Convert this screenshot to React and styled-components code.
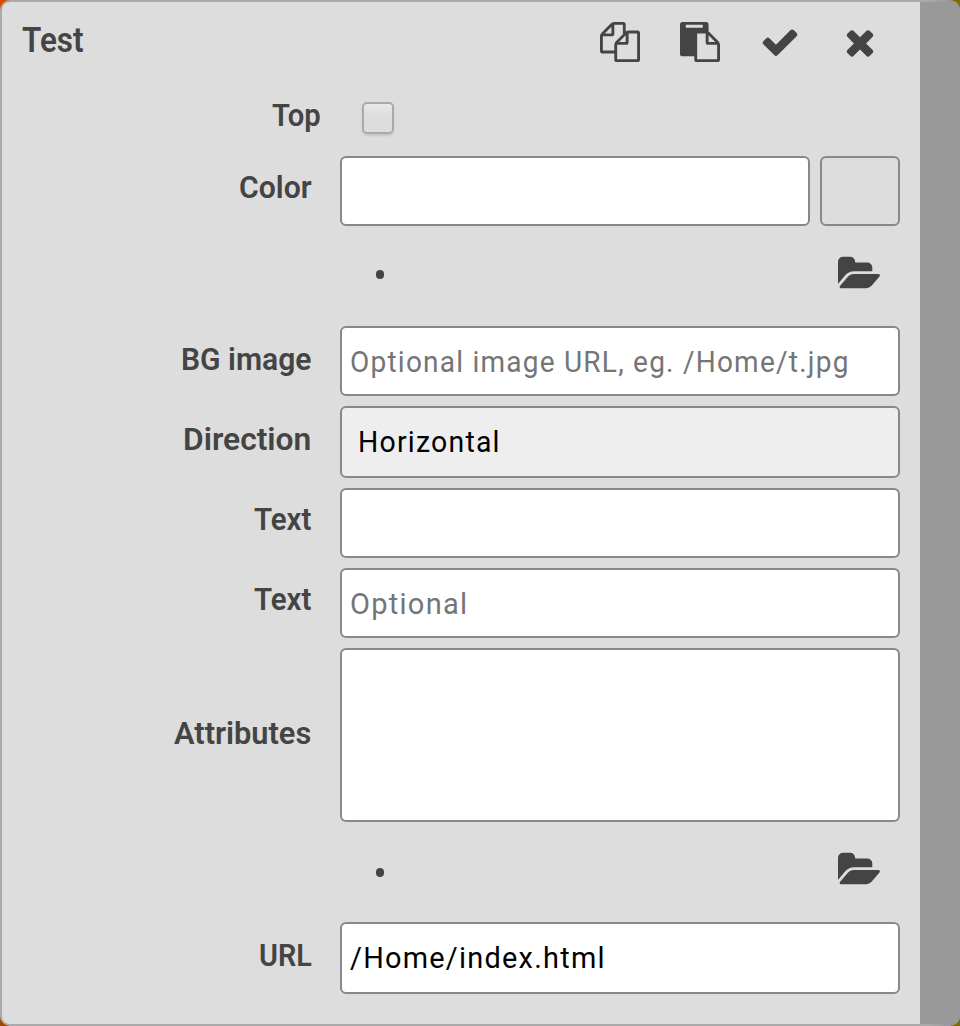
import React, { useLayoutEffect, useRef, useState } from "react";
import styled, { createGlobalStyle } from "styled-components";

const GlobalStyle = createGlobalStyle`
  *, *::before, *::after { box-sizing: border-box; }
  html, body { margin: 0; padding: 0; }
  body {
    background:
      linear-gradient(to right, #9c4a00 0 300px, #7d6c00 600px) 0 513px / 100% 513px no-repeat,
      linear-gradient(to right, #d94a00 0 300px, #7d6c00 600px);
    font-family: Roboto, "Open Sans", "Liberation Sans", sans-serif;
    color: #444;
    overflow: hidden;
  }
`;

const Frame = styled.div`
  display: flex;
  width: 960px;
  height: 1026px;
  padding: 2px 0 2px 2px;
  border-radius: 10px;
  overflow: hidden;
  background: linear-gradient(to right, #aaa 928px, #999 950px);
`;

const Panel = styled.main`
  width: 918px;
  height: 100%;
  border-radius: 8px 0 0 8px;
  background: #ddd;
`;

const ScrollTrack = styled.div`
  flex: 1;
  background: #999;
`;

const Header = styled.header`
  display: flex;
  justify-content: space-between;
  height: 90px;
  padding: 16px 40px 0 20px;
`;

const Title = styled.h1`
  margin: 0;
  font-size: 34.5px;
  line-height: 44px;
  font-weight: 600;
`;

const Actions = styled.nav`
  display: flex;
  gap: 40px;
  padding-top: 4px;
`;

const Icon = styled.svg`
  display: block;
  flex: none;
  width: ${(p) => p.$width || 40}px;
  height: 40px;
  margin-top: ${(p) => p.$shift || 0}px;
  overflow: visible;
  fill: #444;
`;

const Form = styled.form`
  display: flex;
  flex-direction: column;
  gap: 10px;
  padding-right: 20px;
`;

const Row = styled.div`
  display: flex;
  gap: 10px;
  height: ${(p) => p.$height}px;
`;

const Label = styled.label`
  display: flex;
  justify-content: flex-end;
  width: 328px;
  padding: ${(p) => p.$top}px ${(p) => p.$right || 19}px 0 0;
  font-size: 31px;
  line-height: 40px;
  font-weight: 600;
`;

const Field = styled.div`
  flex: 1;
  padding: 14px 0 0 ${(p) => (p.$select ? 16 : 8)}px;
  border: 2px solid #888;
  border-radius: 6px;
  background: ${(p) => (p.$select ? "#eee" : "#fff")};
  color: ${(p) => (p.$placeholder ? "#757575" : "#000")};
  font-size: 30px;
  font-weight: 400;
  line-height: 40px;
  letter-spacing: 1.3px;
`;

const Swatch = styled.div`
  width: 80px;
  border: 2px solid #888;
  border-radius: 6px;
`;

const Checkbox = styled.div`
  width: 32px;
  height: 32px;
  margin: 10px 0 0 22px;
  border: 2px solid #aaa;
  border-radius: 5px;
  background: linear-gradient(#eaeaea, #ddd 40%);
  box-shadow: 0 2px 2px rgba(0, 0, 0, 0.1);
`;

const FileRow = styled.div`
  display: flex;
  justify-content: space-between;
  height: 80px;
  padding: ${(p) => p.$top}px 19px 0 374px;
`;

const Bullet = styled.span`
  width: 8px;
  height: 9px;
  margin-top: ${(p) => p.$top}px;
  border-radius: 4px;
  background: #444;
`;

const FitBox = styled.span`
  display: block;
  width: ${(p) => p.$width}px;
  white-space: pre;
`;

const FitInner = styled.span`
  display: inline-block;
  transform-origin: 0 50%;
`;

function FitText({ width, children }) {
  const ref = useRef(null);
  const [scale, setScale] = useState(1);
  useLayoutEffect(() => {
    setScale(width / ref.current.offsetWidth);
  }, [width, children]);
  return (
    <FitBox $width={width}>
      <FitInner ref={ref} style={{ transform: `scaleX(${scale})` }}>{children}</FitInner>
    </FitBox>
  );
}

const paths = {
  copy: "M1696 384q40 0 68 28t28 68v1216q0 40-28 68t-68 28h-960q-40 0-68-28t-28-68v-288h-544q-40 0-68-28t-28-68v-672q0-40 20-88t48-76l408-408q28-28 76-48t88-20h416q40 0 68 28t28 68v328q68-40 128-40h416zm-544 213l-299 299h299v-299zm-640-384l-299 299h299v-299zm196 647l316-316v-416h-384v416q0 40-28 68t-68 28h-416v640h512v-256q0-40 20-88t48-76zm956 804v-1152h-384v416q0 40-28 68t-68 28h-416v640h896z",
  paste: "M768 1664h896v-640h-416q-40 0-68-28t-28-68v-416h-384v1152zm256-1440v-64q0-13-9.5-22.5t-22.5-9.5h-704q-13 0-22.5 9.5t-9.5 22.5v64q0 13 9.5 22.5t22.5 9.5h704q13 0 22.5-9.5t9.5-22.5zm256 672h299l-299-299v299zm512 128v672q0 40-28 68t-68 28h-960q-40 0-68-28t-28-68v-160h-544q-40 0-68-28t-28-68v-1344q0-40 28-68t68-28h1088q40 0 68 28t28 68v328q21 13 36 28l408 408q28 28 48 76t20 88z",
  check: "M1671 566q0 40-28 68l-724 724-136 136q-28 28-68 28t-68-28l-136-136-362-362q-28-28-28-68t28-68l136-136q28-28 68-28t68 28l294 295 656-657q28-28 68-28t68 28l136 136q28 28 28 68z",
  close: "M1490 1322q0 40-28 68l-136 136q-28 28-68 28t-68-28l-294-294-294 294q-28 28-68 28t-68-28l-136-136q-28-28-28-68t28-68l294-294-294-294q-28-28-28-68t28-68l136-136q28-28 68-28t68 28l294 294 294-294q28-28 68-28t68 28l136 136q28 28 28 68t-28 68l-294 294 294 294q28 28 28 68z",
  folder: "M1879 952q0 31-31 66l-336 396q-43 51-120.5 86.5t-143.5 35.5h-1088q-34 0-60.5-13t-26.5-43q0-31 31-66l336-396q43-51 120.5-86.5t143.5-35.5h1088q34 0 60.5 13t26.5 43zm-343-344v160h-832q-94 0-197 47.5t-164 119.5l-337 396-5 6q0-4-.5-12.5t-.5-12.5v-960q0-92 66-158t158-66h320q92 0 158 66t66 158v32h544q92 0 158 66t66 158z",
};

function Glyph({ name, shift }) {
  const isFolder = name === "folder";
  return (
    <Icon
      $width={isFolder ? 43 : 40}
      $shift={shift}
      viewBox={isFolder ? "0 0 1926 1792" : "0 0 1792 1792"}
      aria-hidden="true"
    >
      <path d={paths[name]} />
    </Icon>
  );
}

function LabelText({ text, width, top = 12, right }) {
  return (
    <Label $top={top} $right={right}>
      <FitText width={width}>{text}</FitText>
    </Label>
  );
}

function FilePicker({ top, bullet }) {
  return (
    <FileRow $top={top}>
      <Bullet $top={bullet} />
      <Glyph name="folder" />
    </FileRow>
  );
}

export default function App() {
  return (
    <>
      <GlobalStyle />
      <Frame>
        <Panel>
          <Header>
            <Title><FitText width={62}>Test</FitText></Title>
            <Actions>
              <Glyph name="copy" />
              <Glyph name="paste" />
              <Glyph name="check" shift={-0.4} />
              <Glyph name="close" shift={-0.4} />
            </Actions>
          </Header>
          <Form>
            <Row $height={54}>
              <LabelText text="Top" width={49} top={4} right={9} />
              <Checkbox role="checkbox" aria-checked="false" />
            </Row>
            <Row $height={70}>
              <LabelText text="Color" width={73} right={18} />
              <Field />
              <Swatch />
            </Row>
            <FilePicker top={18} bullet={16} />
            <Row $height={70}>
              <LabelText text="BG image" width={130} top={14} />
              <Field $placeholder><FitText width={500}>Optional image URL, eg. /Home/t.jpg</FitText></Field>
            </Row>
            <Row $height={72}>
              <LabelText text="Direction" width={128} top={14} />
              <Field $select><FitText width={143}>Horizontal</FitText></Field>
            </Row>
            <Row $height={70}>
              <LabelText text="Text" width={57} />
              <Field />
            </Row>
            <Row $height={70}>
              <LabelText text="Text" width={57} />
              <Field $placeholder><FitText width={118}>Optional</FitText></Field>
            </Row>
            <Row $height={174}>
              <LabelText text="Attributes" width={137} top={66} />
              <Field />
            </Row>
            <FilePicker top={18} bullet={18} />
            <Row $height={72}>
              <LabelText text="URL" width={53} top={14} right={18} />
              <Field><FitText width={256}>/Home/index.html</FitText></Field>
            </Row>
          </Form>
        </Panel>
        <ScrollTrack />
      </Frame>
    </>
  );
}
